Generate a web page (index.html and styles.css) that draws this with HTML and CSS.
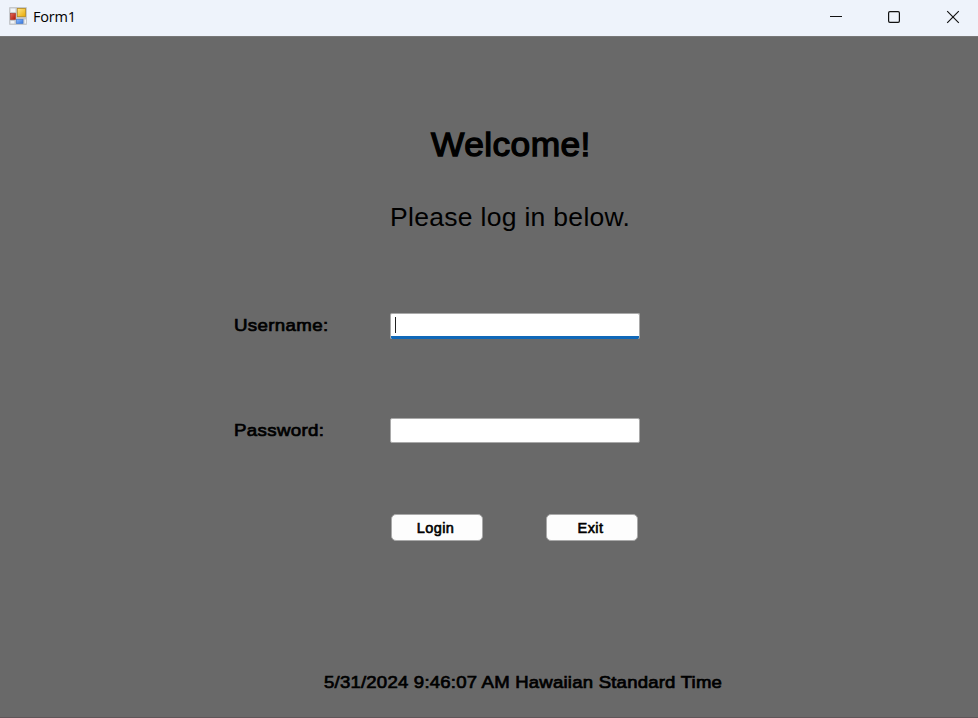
FILE: index.html
```html
<!DOCTYPE html>
<html lang="en">
<head>
<meta charset="utf-8">
<title>Form1</title>
<link rel="stylesheet" href="styles.css">
</head>
<body>
<header class="titlebar">
  <svg class="app-icon" width="18" height="18" viewBox="0 0 18 18">
    <defs>
      <linearGradient id="gold" x2="1" y2="1"><stop offset="0" stop-color="#ffe78a"/><stop offset="1" stop-color="#e8a800"/></linearGradient>
      <linearGradient id="red" x2="1" y2="1"><stop offset="0" stop-color="#e8695a"/><stop offset="1" stop-color="#a81508"/></linearGradient>
      <linearGradient id="blue" x2="1" y2="1"><stop offset="0" stop-color="#8dbcff"/><stop offset="1" stop-color="#3474dc"/></linearGradient>
    </defs>
    <rect width="18" height="18" rx="1" fill="#c5c8cc"/>
    <path d="M1.5 1.5h5v3.500h-5zM1.500 14h4v2.500h-4zM15.500 12.500h1.500v4h-1.500z" fill="#f1f4f8"/>
    <rect x="1.500" y="6.500" width="5" height="6" fill="url(#red)" stroke="#b03b30" stroke-width=".7"/>
    <rect x="8.300" y="1.500" width="8.200" height="8.200" fill="url(#gold)" stroke="#b58a20" stroke-width=".8"/>
    <rect x="7.500" y="12.300" width="6.500" height="4.200" fill="url(#blue)" stroke="#4a7fd0" stroke-width=".7"/>
  </svg>
  <span class="caption">Form1</span>
  <svg class="controls" width="132" height="14" viewBox="0 0 132 14">
    <path d="M1 6.500h12" stroke="#111"/>
    <rect x="59.600" y="1.600" width="10.800" height="10.800" rx="1.300" fill="none" stroke="#111" stroke-width="1.200"/>
    <path d="M118.200 1.200l11.600 11.600M129.800 1.200l-11.600 11.600" stroke="#111" stroke-width="1.150"/>
  </svg>
</header>
<main class="form">
  <h1 class="welcome">Welcome!</h1>
  <p class="prompt">Please log in below.</p>
  <div class="fields">
    <label class="label">Username:</label>
    <div class="input focused"><i class="caret"></i></div>
    <label class="label">Password:</label>
    <div class="input"></div>
  </div>
  <div class="buttons">
    <button class="button">Login</button>
    <button class="button">Exit</button>
  </div>
  <footer class="clock">5/31/2024 9:46:07 AM Hawaiian Standard Time</footer>
</main>
</body>
</html>
```
FILE: styles.css
```css
* { box-sizing: border-box; }
body {
  margin: 0;
  height: 718px;
  overflow: hidden;
  display: flex;
  flex-direction: column;
  background: #696969;
  color: #000;
  font-family: "Liberation Sans", Arial, sans-serif;
}
.titlebar {
  height: 36px;
  flex: none;
  display: flex;
  align-items: center;
  padding: 0 17px 3px 9px;
  background: #eef3fb;
}
.app-icon { margin-top: -1px; }
.caption {
  margin-left: 6px;
  font: 14.500px/20px "Open Sans", sans-serif;
  letter-spacing: -.2px;
}
.controls { margin-left: auto; }
.form {
  flex: 1;
  display: flex;
  flex-direction: column;
  border-top: 1px solid #777;
  border-bottom: 1px solid #5f5659;
}
.welcome {
  margin: 88px 0 0 431px;
  font-size: 33.500px;
  font-weight: normal;
  line-height: 40px;
  letter-spacing: .4px;
  -webkit-text-stroke: 1.300px #000;
  transform: scaleX(1.055);
  transform-origin: 0 0;
}
.prompt {
  margin: 37px 0 0 390px;
  font-size: 26.500px;
  line-height: 30px;
  letter-spacing: .3px;
}
.fields {
  display: grid;
  grid-template-columns: 156px 250px;
  row-gap: 80px;
  margin: 81px 0 0 234px;
}
.label {
  font-size: 17px;
  line-height: 25px;
  letter-spacing: .3px;
  -webkit-text-stroke: .7px #000;
  transform: scaleX(1.1);
  transform-origin: 0 0;
}
.input {
  height: 25px;
  background: #fff;
  border: 1px solid #a9a9a9;
  border-radius: 2px;
  padding: 3px 0 0 4px;
}
.focused {
  height: 26px;
  margin-bottom: -1px;
  border-bottom: 0;
  background: linear-gradient(#1068b8, #1068b8) bottom / 100% 3px no-repeat border-box #fff;
}
.caret {
  display: block;
  width: 1px;
  height: 16px;
  background: #222;
}
.buttons {
  display: flex;
  gap: 63px;
  margin: 71px 0 0 391px;
}
.button {
  width: 92px;
  height: 27px;
  padding: 0 3px 0 0;
  border: 1px solid #a9a9a9;
  border-radius: 5px;
  background: #fdfdfd;
  color: #000;
  font: 14.500px/20px "Liberation Sans", Arial, sans-serif;
  letter-spacing: .4px;
  -webkit-text-stroke: .6px #000;
}
.clock {
  align-self: flex-start;
  margin: 131px 0 0 324px;
  font-size: 17px;
  line-height: 22px;
  letter-spacing: .2px;
  -webkit-text-stroke: .7px #000;
  white-space: nowrap;
  transform: scaleX(1.091);
  transform-origin: 0 0;
}
```
